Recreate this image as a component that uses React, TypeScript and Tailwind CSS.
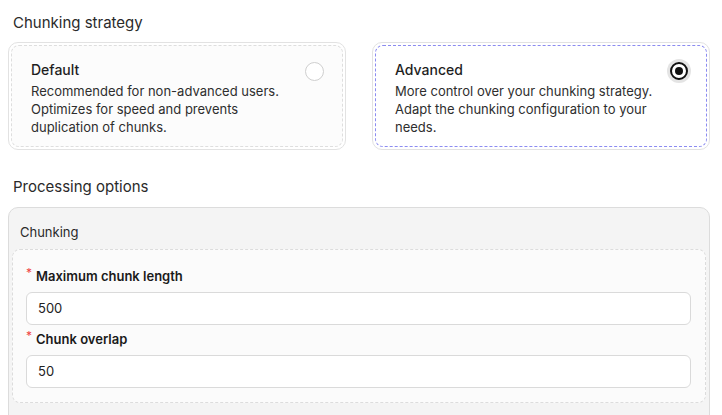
import React from "react";

const font = { fontFamily: "Inter, 'Noto Sans', sans-serif" };

function StrategyCard({
  title,
  lines,
  selected,
}: {
  title: string;
  lines: string;
  selected?: boolean;
}) {
  return (
    <div className="w-[338px] h-[108px] rounded-[10px] border border-[#e2e2e2] p-[2px] bg-white">
      <div
        className={`h-full rounded-[8px] border border-dashed bg-[#fcfcfc] pl-[19px] pr-[18px] pt-[14px] flex ${
          selected ? "border-[#8b8bf0] bg-white" : "border-[#dedede]"
        }`}
      >
        <div className="flex-1">
          <p className="text-[14px] font-medium text-[#1f1f1f] leading-[20px]">{title}</p>
          <p className="mt-[2px] text-[13px] leading-[18px] text-[#2e2e2e] w-[272px]">{lines}</p>
        </div>
        {selected ? (
          <div className="w-[24px] h-[24px] rounded-full bg-[#e4e4e4] flex items-center justify-center -mt-[1px] -mr-[3px]">
            <div className="w-[18px] h-[18px] rounded-full border-2 border-[#111] bg-white flex items-center justify-center">
              <div className="w-[8px] h-[8px] rounded-full bg-[#111]" />
            </div>
          </div>
        ) : (
          <div className="w-[19px] h-[19px] rounded-full border border-[#cfcfcf] bg-white mt-[2px]" />
        )}
      </div>
    </div>
  );
}

function Field({ label, value }: { label: string; value: string }) {
  return (
    <div>
      <div className="flex items-start gap-[4px] h-[20px]">
        <span className="text-[#ef4444] text-[12px] leading-[12px] mt-[1px]">*</span>
        <span className="text-[13px] font-semibold text-[#1a1a1a] leading-[20px]">{label}</span>
      </div>
      <div className="mt-[6px] h-[33px] rounded-[6px] border border-[#dadada] bg-white flex items-center px-[11px] text-[13px] text-[#222]">
        {value}
      </div>
    </div>
  );
}

export default function App() {
  return (
    <div className="w-[722px] h-[415px] overflow-hidden bg-white pl-[8px]" style={font}>
      <h2 className="pl-[5px] pt-[12px] text-[15px] leading-[22px] text-[#2a2a2a]">Chunking strategy</h2>
      <div className="mt-[8px] flex gap-[26px]">
        <StrategyCard
          title="Default"
          lines="Recommended for non-advanced users. Optimizes for speed and prevents duplication of chunks."
        />
        <StrategyCard
          title="Advanced"
          lines="More control over your chunking strategy. Adapt the chunking configuration to your needs."
          selected
        />
      </div>

      <h2 className="pl-[5px] mt-[26px] text-[15px] leading-[22px] text-[#2a2a2a]">Processing options</h2>
      <div className="mt-[9px] w-[702px] h-[220px] rounded-t-[10px] border border-[#dcdcdc] bg-[#f4f4f4] px-[3px]">
        <p className="pl-[8px] pt-[15px] text-[13px] leading-[18px] text-[#2a2a2a]">Chunking</p>
        <div className="mt-[8px] rounded-[8px] border border-dashed border-[#dcdcdc] bg-[#fbfbfb] pl-[13px] pr-[14px] pt-[16px] pb-[14px] flex flex-col gap-[4px]">
          <Field label="Maximum chunk length" value="500" />
          <Field label="Chunk overlap" value="50" />
        </div>
      </div>
    </div>
  );
}
